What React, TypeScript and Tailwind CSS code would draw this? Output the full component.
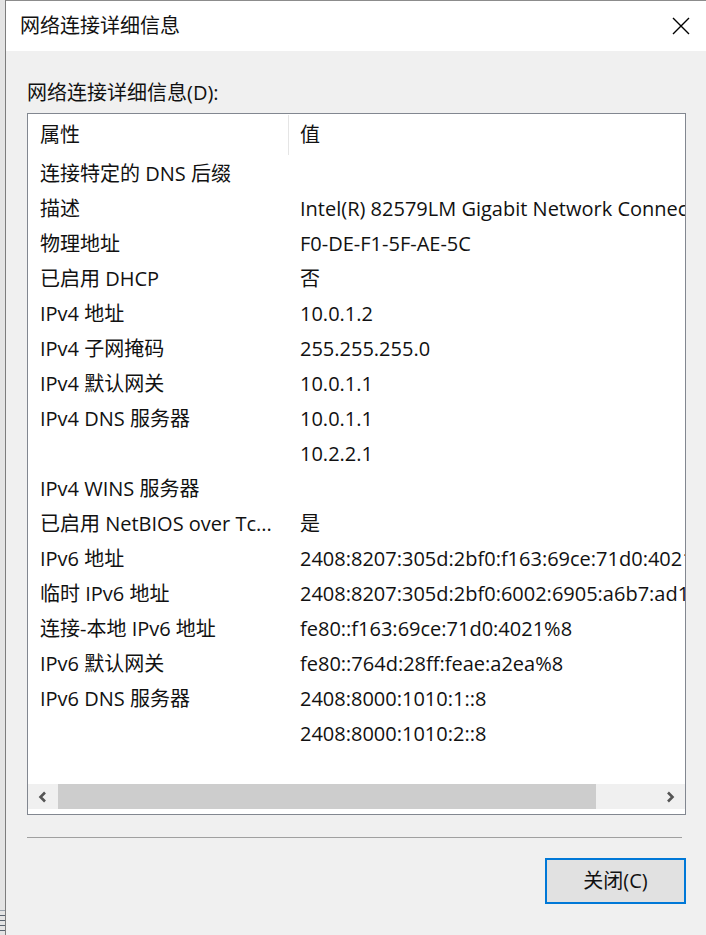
import React from "react";

const rows: [string, string][] = [
  ["连接特定的 DNS 后缀", ""],
  ["描述", "Intel(R) 82579LM Gigabit Network Connection"],
  ["物理地址", "F0-DE-F1-5F-AE-5C"],
  ["已启用 DHCP", "否"],
  ["IPv4 地址", "10.0.1.2"],
  ["IPv4 子网掩码", "255.255.255.0"],
  ["IPv4 默认网关", "10.0.1.1"],
  ["IPv4 DNS 服务器", "10.0.1.1"],
  ["", "10.2.2.1"],
  ["IPv4 WINS 服务器", ""],
  ["已启用 NetBIOS over Tc...", "是"],
  ["IPv6 地址", "2408:8207:305d:2bf0:f163:69ce:71d0:4021"],
  ["临时 IPv6 地址", "2408:8207:305d:2bf0:6002:6905:a6b7:ad1c"],
  ["连接-本地 IPv6 地址", "fe80::f163:69ce:71d0:4021%8"],
  ["IPv6 默认网关", "fe80::764d:28ff:feae:a2ea%8"],
  ["IPv6 DNS 服务器", "2408:8000:1010:1::8"],
  ["", "2408:8000:1010:2::8"],
];

const font = "font-['Open_Sans','Noto_Sans_CJK_SC',sans-serif]";

export default function App() {
  return (
    <div className={`flex h-[935px] w-[706px] overflow-hidden bg-[#dcdcdc] text-[#111] ${font}`}>
      {/* edge of the window behind */}
      <div className="flex w-[6px] shrink-0 flex-col justify-end border-r border-[#7d7d7d] bg-[#e4e4e4]">
        <div className="mb-[2px] flex flex-col gap-[4px] pb-[2px]">
          <div className="h-px bg-[#9aa3ad]" />
          <div className="h-px bg-[#5b6470]" />
          <div className="h-px bg-[#5b6470]" />
          <div className="h-px bg-[#5b6470]" />
          <div className="h-px bg-[#5b6470]" />
        </div>
      </div>

      <div className="flex min-w-0 flex-1 flex-col border-t border-[#8c8c8c]">
        {/* title bar */}
        <div className="flex h-[50px] items-center justify-between bg-white pl-[14px] pr-[16px]">
          <span className="text-[20px]">网络连接详细信息</span>
          <svg width="18" height="18" viewBox="0 0 18 18" className="text-black">
            <path d="M1 1 L17 17 M17 1 L1 17" stroke="currentColor" strokeWidth="1.4" />
          </svg>
        </div>

        <div className="flex flex-1 flex-col bg-[#f0f0f0] pl-[21px] pr-[20px]">
          <div className="mt-[28px] text-[20px] leading-[27px]">网络连接详细信息(D):</div>

          {/* list view */}
          <div className="mt-[7px] flex h-[702px] flex-col border border-[#828790] bg-white">
            <div className="flex h-[42px] shrink-0 items-center text-[20px]">
              <div className="w-[260px] pl-[12px]">属性</div>
              <div className="h-[40px] w-px bg-[#e5e5e5]" />
              <div className="pl-[11px]">值</div>
            </div>

            <div className="min-w-0 flex-1 overflow-hidden">
              {rows.map(([k, v], i) => (
                <div key={i} className="flex h-[35px] items-center whitespace-nowrap text-[20px]">
                  <div className="w-[272px] shrink-0 pl-[12px]">{k}</div>
                  <div className="shrink-0">{v}</div>
                </div>
              ))}
            </div>

            {/* horizontal scrollbar */}
            <div className="mb-[5px] flex h-[25px] shrink-0 items-center bg-[#f0f0f0]">
              <div className="flex w-[30px] justify-center">
                <svg width="10" height="12" viewBox="0 0 10 12">
                  <path d="M7 1.5 L2.5 6 L7 10.5" fill="none" stroke="#555" strokeWidth="2.6" />
                </svg>
              </div>
              <div className="h-full w-[538px] bg-[#cdcdcd]" />
              <div className="flex-1" />
              <div className="flex w-[30px] justify-center">
                <svg width="10" height="12" viewBox="0 0 10 12">
                  <path d="M3 1.5 L7.5 6 L3 10.5" fill="none" stroke="#555" strokeWidth="2.6" />
                </svg>
              </div>
            </div>
          </div>

          <div className="mt-[22px] h-px w-[655px] bg-[#a0a0a0]" />

          <div className="mt-[20px] flex justify-end">
            <button className="flex h-[46px] w-[141px] items-center justify-center border-2 border-[#0078d7] bg-[#e1e1e1] text-[20px]">
              关闭(C)
            </button>
          </div>
        </div>
      </div>
    </div>
  );
}
